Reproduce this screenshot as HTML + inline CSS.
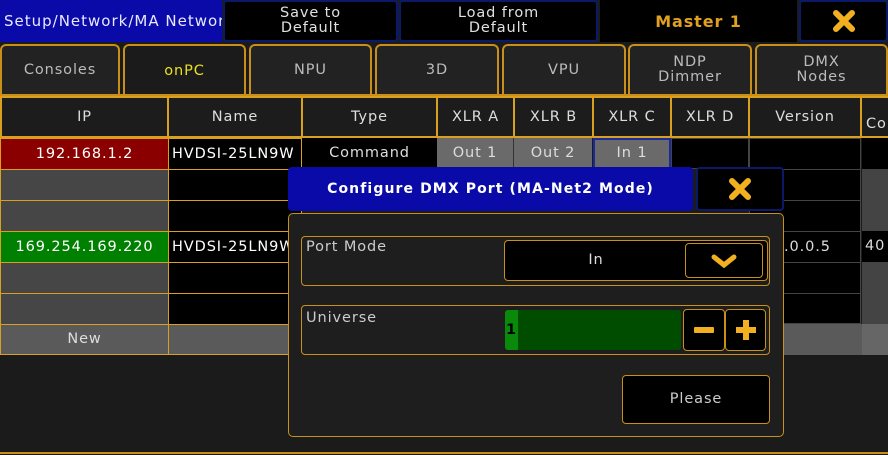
<!DOCTYPE html><html><head><style>
*{box-sizing:border-box;margin:0;padding:0}
body{width:888px;height:455px;background:#1b1b1b;font-family:"DejaVu Sans","Liberation Sans",sans-serif;color:#ddd;position:relative;overflow:hidden;font-size:14.5px;letter-spacing:0.9px}
.a{position:absolute;display:flex;align-items:center;justify-content:center;text-align:center;line-height:15px;white-space:nowrap}
.btn{background:#000;border:2px solid #0a1a6a;border-radius:4px;color:#e0e0e0}
.tab{background:#222;border:2px solid #c8901a;border-bottom:none;border-radius:6px 6px 0 0;color:#bbb}
.h{background:#1c1c1c;border:2px solid #d9a020;color:#ddd}
.c{border:1px solid #d9a020}
.g{border:1px solid #444}
</style></head><body>
<div class="a" style="left:0;top:0;width:222px;height:42px;background:#0a0aa8;color:#e8e8ff;justify-content:flex-start;padding-left:4px;font-size:15px;letter-spacing:1px;overflow:hidden">Setup/Network/MA Networ</div>
<div class="a btn" style="left:223px;top:0;width:175px;height:42px">Save to<br>Default</div>
<div class="a btn" style="left:399px;top:0;width:199px;height:42px">Load from<br>Default</div>
<div class="a" style="left:600px;top:0;width:197px;height:42px;background:#000;color:#e0a020;font-weight:bold;font-size:16px">Master 1</div>
<div class="a btn" style="left:799px;top:0;width:89px;height:42px"><svg width="24" height="24"><path d="M4 4L20 20M20 4L4 20" stroke="#f0b020" stroke-width="6" stroke-linecap="round"/></svg></div>

<div class="a tab" style="left:0;top:44px;width:120px;height:50px">Consoles</div>
<div class="a tab" style="left:123px;top:44px;width:123px;height:52px;background:#1b1b1b;color:#e8e020">onPC</div>
<div class="a tab" style="left:249px;top:44px;width:123px;height:50px">NPU</div>
<div class="a tab" style="left:375px;top:44px;width:124px;height:50px">3D</div>
<div class="a tab" style="left:502px;top:44px;width:124px;height:50px">VPU</div>
<div class="a tab" style="left:628px;top:44px;width:124px;height:50px">NDP<br>Dimmer</div>
<div class="a tab" style="left:755px;top:44px;width:133px;height:50px">DMX<br>Nodes</div>
<div style="position:absolute;left:0;top:94px;width:888px;height:2px;background:#c8901a"></div>

<div class="a h" style="left:0;top:96px;width:169px;height:42px">IP</div>
<div class="a h" style="left:167px;top:96px;width:136px;height:42px">Name</div>
<div class="a h" style="left:301px;top:96px;width:137px;height:42px">Type</div>
<div class="a h" style="left:436px;top:96px;width:79px;height:42px">XLR A</div>
<div class="a h" style="left:513px;top:96px;width:81px;height:42px">XLR B</div>
<div class="a h" style="left:592px;top:96px;width:80px;height:42px">XLR C</div>
<div class="a h" style="left:670px;top:96px;width:80px;height:42px">XLR D</div>
<div class="a h" style="left:748px;top:96px;width:114px;height:42px">Version</div>
<div class="a h" style="left:860px;top:96px;width:30px;height:42px;padding-top:14px;justify-content:flex-start;padding-left:4px;overflow:hidden">Co</div>

<div class="a c" style="left:0;top:138px;width:169px;height:32px;background:#8a0000;color:#fff">192.168.1.2</div>
<div class="a c" style="left:0;top:169px;width:169px;height:32px;background:#464646"></div>
<div class="a c" style="left:0;top:200px;width:169px;height:32px;background:#464646"></div>
<div class="a c" style="left:0;top:231px;width:169px;height:32px;background:#008000;color:#fff">169.254.169.220</div>
<div class="a c" style="left:0;top:262px;width:169px;height:32px;background:#464646"></div>
<div class="a c" style="left:0;top:293px;width:169px;height:32px;background:#464646"></div>
<div class="a c" style="left:0;top:324px;width:169px;height:31px;background:#5a5a5a">New</div>
<div class="a c" style="left:168px;top:138px;width:134px;height:32px;background:#000;color:#fff;justify-content:flex-start;padding-left:3px;overflow:hidden">HVDSI-25LN9W</div>
<div class="a c" style="left:168px;top:169px;width:134px;height:32px;background:#000"></div>
<div class="a c" style="left:168px;top:200px;width:134px;height:32px;background:#000"></div>
<div class="a c" style="left:168px;top:231px;width:134px;height:32px;background:#000;color:#fff;justify-content:flex-start;padding-left:3px;overflow:hidden">HVDSI-25LN9W</div>
<div class="a c" style="left:168px;top:262px;width:134px;height:32px;background:#000"></div>
<div class="a c" style="left:168px;top:293px;width:134px;height:32px;background:#000"></div>
<div class="a c" style="left:168px;top:324px;width:134px;height:31px;background:#5a5a5a"></div>
<div class="a" style="left:302px;top:324px;width:586px;height:31px;background:#5a5a5a"></div>
<div class="a" style="left:302px;top:138px;width:135px;height:31px;background:#000">Command</div>
<div class="a" style="left:437px;top:138px;width:77px;height:31px;background:#6a6a6a;border-right:1px solid #333">Out 1</div>
<div class="a" style="left:514px;top:138px;width:78px;height:31px;background:#6a6a6a">Out 2</div>
<div class="a" style="left:593px;top:138px;width:78px;height:31px;background:#6a6a6a;border:2px solid #1a2a9a">In 1</div>
<div class="a g" style="left:671px;top:138px;width:78px;height:31px;background:#000"></div>
<div style="position:absolute;left:749px;top:138px;width:112px;height:186px;background:#000"></div>
<div class="g" style="position:absolute;left:749px;top:138px;width:112px;height:32px"></div>
<div class="g" style="position:absolute;left:749px;top:169px;width:112px;height:32px"></div>
<div class="g" style="position:absolute;left:749px;top:200px;width:112px;height:32px"></div>
<div class="a g" style="left:749px;top:231px;width:112px;height:32px;justify-content:flex-start;padding-left:34px">.0.0.5</div>
<div class="g" style="position:absolute;left:749px;top:262px;width:112px;height:32px"></div>
<div class="g" style="position:absolute;left:749px;top:293px;width:112px;height:31px"></div>
<div style="position:absolute;left:862px;top:138px;width:26px;height:31px;background:#000"></div>
<div style="position:absolute;left:862px;top:169px;width:26px;height:62px;background:#444"></div>
<div class="a" style="left:862px;top:231px;width:26px;height:31px;background:#000;justify-content:flex-start;padding-left:3px">40</div>
<div style="position:absolute;left:862px;top:262px;width:26px;height:62px;background:#444"></div>
<div style="position:absolute;left:862px;top:324px;width:26px;height:31px;background:#666"></div>
<div style="position:absolute;left:0;top:452px;width:888px;height:2px;background:#c8901a"></div>

<div class="a" style="left:288px;top:167px;width:405px;height:44px;background:#0a0aa8;color:#fff;font-weight:bold;font-size:14px;letter-spacing:1.1px;border-radius:4px">Configure DMX Port (MA-Net2 Mode)</div>
<div class="a btn" style="left:696px;top:167px;width:88px;height:44px"><svg width="24" height="24"><path d="M4 4L20 20M20 4L4 20" stroke="#f0b020" stroke-width="6" stroke-linecap="round"/></svg></div>
<div style="position:absolute;left:288px;top:213px;width:496px;height:224px;background:#1e1e1e;border:1.5px solid #c8901a;border-radius:5px"></div>
<div style="position:absolute;left:301px;top:236px;width:469px;height:50px;border:1.5px solid #c8901a;border-radius:4px"></div>
<div class="a" style="left:306px;top:240px;color:#ccc">Port Mode</div>
<div class="a" style="left:504px;top:240px;width:264px;height:41px;background:#000;border:1.5px solid #c8901a;border-radius:4px;padding-right:80px">In</div>
<div class="a" style="left:685px;top:243px;width:78px;height:35px;background:#000;border:1.5px solid #c8901a;border-radius:4px"><svg width="28" height="16" viewBox="0 0 28 16"><path d="M4 4 L14 12 L24 4" stroke="#f0b020" stroke-width="5" fill="none" stroke-linecap="round"/></svg></div>
<div style="position:absolute;left:301px;top:305px;width:469px;height:50px;border:1.5px solid #c8901a;border-radius:4px"></div>
<div class="a" style="left:306px;top:311px;color:#ccc">Universe</div>
<div style="position:absolute;left:505px;top:310px;width:176px;height:40px;background:#004d00;border-radius:3px"></div>
<div class="a" style="left:505px;top:310px;width:13px;height:40px;background:#0a8a0a;color:#000;font-weight:bold;border-radius:3px 0 0 3px">1</div>
<div class="a" style="left:683px;top:309px;width:42px;height:42px;background:#000;border:1.5px solid #c8901a;border-radius:4px"><div style="width:20px;height:6px;background:#f0b020;border-radius:1px"></div></div>
<div class="a" style="left:725px;top:309px;width:41px;height:42px;background:#000;border:1.5px solid #c8901a;border-radius:4px"><svg width="24" height="24"><path d="M12 2V22M2 12H22" stroke="#f0b020" stroke-width="6"/></svg></div>
<div class="a" style="left:622px;top:375px;width:148px;height:49px;background:#000;border:1.5px solid #c8901a;border-radius:4px;color:#ccc">Please</div>
</body></html>
